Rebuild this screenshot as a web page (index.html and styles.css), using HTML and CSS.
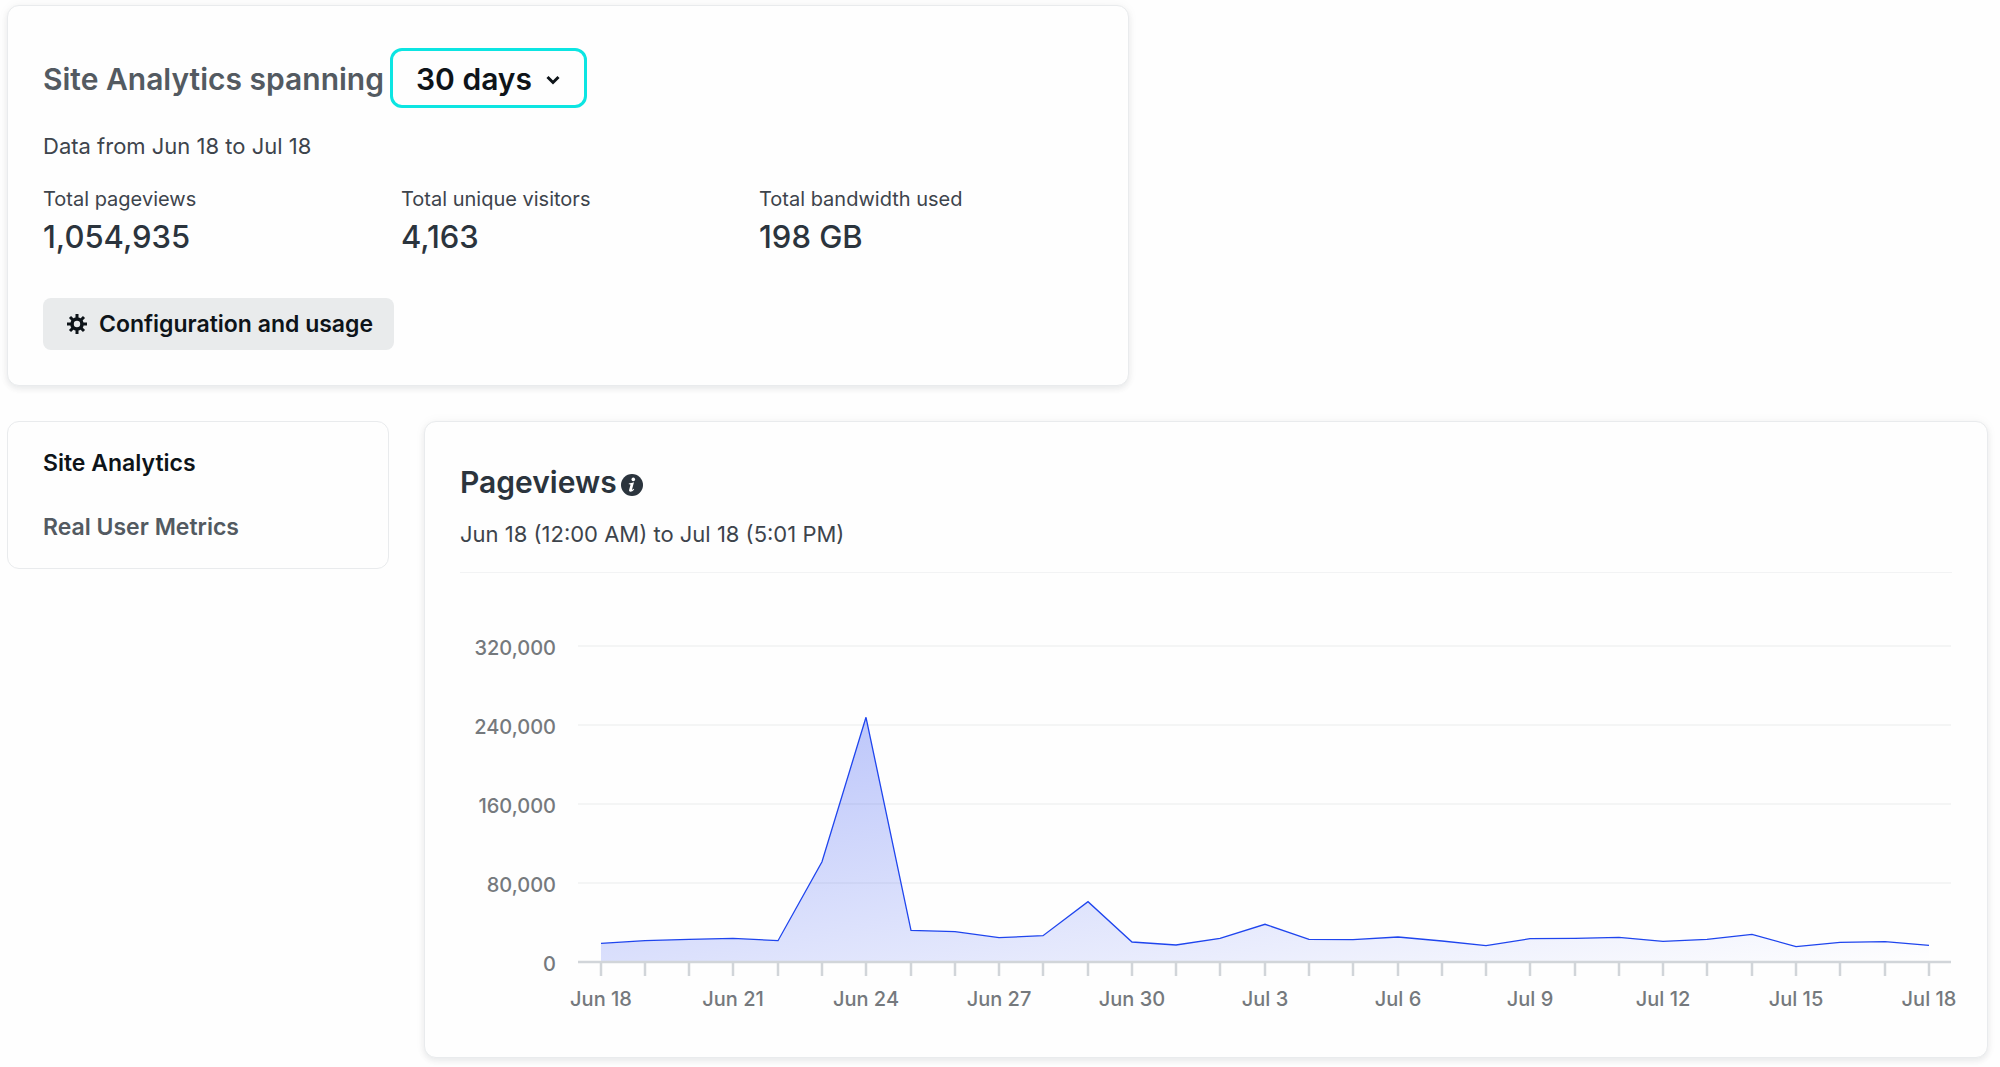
FILE: index.html
```html
<!DOCTYPE html>
<html lang="en">
<head>
<meta charset="utf-8">
<meta name="viewport" content="width=device-width, initial-scale=1">
<title>Site Analytics</title>
<link rel="stylesheet" href="styles.css">
</head>
<body>
<main class="page">
  <section class="card summary">
    <div class="summary-head">
      <h1 class="title title-muted"><label for="span">Site Analytics spanning</label></h1>
      <div class="picker">
        <select id="span" class="picker-select">
          <option>30 days</option>
        </select>
        <svg class="picker-icon" viewBox="0 0 14 10" aria-hidden="true"><path d="M1.500 2l5.500 5.500 5.500-5.500" fill="none" stroke="currentColor" stroke-width="3"/></svg>
      </div>
    </div>
    <p class="range">Data from Jun 18 to Jul 18</p>
    <dl class="metrics">
      <div class="metric"><dt class="metric-label">Total pageviews</dt><dd class="metric-value">1,054,935</dd></div>
      <div class="metric"><dt class="metric-label">Total unique visitors</dt><dd class="metric-value">4,163</dd></div>
      <div class="metric"><dt class="metric-label">Total bandwidth used</dt><dd class="metric-value">198 GB</dd></div>
    </dl>
    <button class="config" type="button">
      <svg class="config-icon" viewBox="-10 -10 20 20" aria-hidden="true">
        <circle r="5" fill="none" stroke="currentColor" stroke-width="3.6"/>
        <path d="M0-6V-10M0 6V10M-6 0H-10M6 0H10M-4-4L-7-7M4-4L7-7M-4 4L-7 7M4 4L7 7" fill="none" stroke="currentColor" stroke-width="3"/>
      </svg>
      Configuration and usage
    </button>
  </section>

  <div class="columns">
    <nav class="sidebar" aria-label="Analytics">
      <a class="sidebar-link is-current" href="#site" aria-current="page">Site Analytics</a>
      <a class="sidebar-link" href="#rum">Real User Metrics</a>
    </nav>

    <section class="card chart-card">
      <header class="chart-head">
        <h2 class="title">Pageviews
          <svg class="info" viewBox="0 0 22 22" role="img" aria-label="About pageviews">
            <circle cx="11" cy="11" r="11" fill="currentColor"/>
            <circle cx="12.3" cy="5.4" r="1.8" fill="#fff"/>
            <path d="M7.8 9.6c1.6-.2 3-.8 5.2-1.3l-1.9 7c-.2.8.3.7 1.5-.6l.6.5c-1.300 1.800-2.500 2.500-3.700 2.500-1.300 0-1.700-.9-1.300-2.200l1.200-4.300c.2-.7 0-.9-1.600-.9z" fill="#fff"/>
          </svg>
        </h2>
        <p class="chart-range">Jun 18 (12:00 AM) to Jul 18 (5:01 PM)</p>
      </header>
      <svg class="chart" viewBox="0 0 1492 449" role="img" aria-label="Pageviews per day">
        <defs>
          <linearGradient id="fade" x1="0" y1="0" x2="1" y2="1">
            <stop offset="0" stop-color="#183af1" stop-opacity=".31"/>
            <stop offset="1" stop-color="#183af1" stop-opacity="0"/>
          </linearGradient>
        </defs>
        <path class="grid" d="M118 73H1491M118 152H1491M118 231H1491M118 310H1491"/>
        <path fill="url(#fade)" d="M141 389V370.300L185 367.700 229 366.300 273 365.300 318 367.700 362 288.700 406 144.300 451 357.300 495 358.700 539 364.700 583 362.700 628 328.700 672 369 716 372 760 365.300 805 351.300 849 366.300 893 366.700 938 364 982 368 1026 372.700 1070 365.700 1115 365.300 1159 364.300 1203 368.300 1247 366.300 1292 361.300 1336 373.700 1380 369.300 1425 368.700 1469 372.300V389Z"/>
        <path class="line" d="M141 370.300L185 367.700 229 366.300 273 365.300 318 367.700 362 288.700 406 144.300 451 357.300 495 358.700 539 364.700 583 362.700 628 328.700 672 369 716 372 760 365.300 805 351.300 849 366.300 893 366.700 938 364 982 368 1026 372.700 1070 365.700 1115 365.300 1159 364.300 1203 368.300 1247 366.300 1292 361.300 1336 373.700 1380 369.300 1425 368.700 1469 372.300"/>
        <path class="axis" d="M118 389H1491M141 389v14M185 389v14M229 389v14M273 389v14M318 389v14M362 389v14M406 389v14M451 389v14M495 389v14M539 389v14M583 389v14M628 389v14M672 389v14M716 389v14M760 389v14M805 389v14M849 389v14M893 389v14M938 389v14M982 389v14M1026 389v14M1070 389v14M1115 389v14M1159 389v14M1203 389v14M1247 389v14M1292 389v14M1336 389v14M1380 389v14M1425 389v14M1469 389v14"/>
        <g class="tick tick-y">
          <text x="96" y="82">320,000</text>
          <text x="96" y="161">240,000</text>
          <text x="96" y="240">160,000</text>
          <text x="96" y="319">80,000</text>
          <text x="96" y="398">0</text>
        </g>
        <g class="tick tick-x">
          <text x="141" y="433">Jun 18</text>
          <text x="273" y="433">Jun 21</text>
          <text x="406" y="433">Jun 24</text>
          <text x="539" y="433">Jun 27</text>
          <text x="672" y="433">Jun 30</text>
          <text x="805" y="433">Jul 3</text>
          <text x="938" y="433">Jul 6</text>
          <text x="1070" y="433">Jul 9</text>
          <text x="1203" y="433">Jul 12</text>
          <text x="1336" y="433">Jul 15</text>
          <text x="1469" y="433">Jul 18</text>
        </g>
      </svg>
    </section>
  </div>
</main>
</body>
</html>
```
FILE: styles.css
```css
* { box-sizing: border-box; }

body {
  margin: 0;
  background: #fefefe;
  color: #2b343d;
  font-family: Inter, "Liberation Sans", sans-serif;
}

h1, h2, p, dl, dd { margin: 0; }

.page {
  display: flex;
  flex-direction: column;
  gap: 35px;
  padding: 5px 12px 8px 7px;
}

.card {
  padding: 35px;
  border: 1px solid #e9ebed;
  border-radius: 12px;
  background: #fefefe;
  box-shadow: 0 3px 6px rgba(14, 30, 37, .07), 0 0 12px rgba(14, 30, 37, .04);
}

.summary {
  width: 100%;
  max-width: 1122px;
}

.summary-head {
  display: flex;
  align-items: center;
  gap: 6px;
  margin-top: 7px;
}

.title {
  padding-top: 2px;
  font-size: 30px;
  line-height: 40px;
  font-weight: 600;
}

.title-muted { color: #535a61; }

.picker { position: relative; }

.picker-select {
  display: block;
  width: 197px;
  height: 60px;
  padding: 2px 23px 0;
  border: 3px solid #0ce5e2;
  border-radius: 12px;
  background: #fefefe;
  color: #0e1419;
  font: 600 30px/40px Inter, "Liberation Sans", sans-serif;
  appearance: none;
}

.picker-icon {
  position: absolute;
  top: 27px;
  right: 27px;
  width: 14px;
  height: 10px;
  color: #0e1419;
  pointer-events: none;
}

.range {
  margin-top: 20px;
  font-size: 22px;
  line-height: 36px;
  color: #3d444c;
}

.metrics {
  display: grid;
  grid-template-columns: repeat(3, 1fr);
  gap: 24px;
  margin-top: 20px;
}

.metric-label {
  font-size: 20px;
  line-height: 30px;
  color: #3d444c;
}

.metric-value {
  font-size: 31px;
  line-height: 46px;
  font-weight: 500;
}

.config {
  display: flex;
  align-items: center;
  gap: 12px;
  height: 52px;
  margin-top: 38px;
  padding: 0 21px 0 24px;
  border: 0;
  border-radius: 8px;
  background: #e9ebec;
  color: #0e1419;
  font: 600 23px/36px Inter, "Liberation Sans", sans-serif;
}

.config-icon {
  width: 20px;
  height: 20px;
}

.columns {
  display: grid;
  grid-template-columns: 382px 1fr;
  gap: 35px;
  align-items: start;
}

.sidebar {
  display: flex;
  flex-direction: column;
  gap: 28px;
  padding: 23px 35px;
  border: 1px solid #e9ebed;
  border-radius: 12px;
  background: #fefefe;
}

.sidebar-link {
  font-size: 23px;
  line-height: 36px;
  font-weight: 600;
  color: #535a61;
  text-decoration: none;
}

.sidebar-link.is-current { color: #0e1419; }

.chart-head {
  padding: 3px 0 20px;
  border-bottom: 1px solid #f2f3f4;
}

.info {
  width: 22px;
  height: 22px;
  margin-left: -3px;
  vertical-align: -3px;
}

.chart-range {
  margin-top: 14px;
  font-size: 22px;
  line-height: 36px;
  color: #3d444c;
}

.chart {
  display: block;
  width: 100%;
  height: auto;
  overflow: visible;
}

.grid { fill: none; stroke: #f4f5f5; stroke-width: 2; }
.line { fill: none; stroke: #1f45ee; stroke-width: 1.3; }
.axis { fill: none; stroke: #d1d5d9; stroke-width: 2.5; }

.tick {
  font-size: 20px;
  font-weight: 500;
  fill: #75797d;
}

.tick-y { text-anchor: end; }
.tick-x { text-anchor: middle; }
```
